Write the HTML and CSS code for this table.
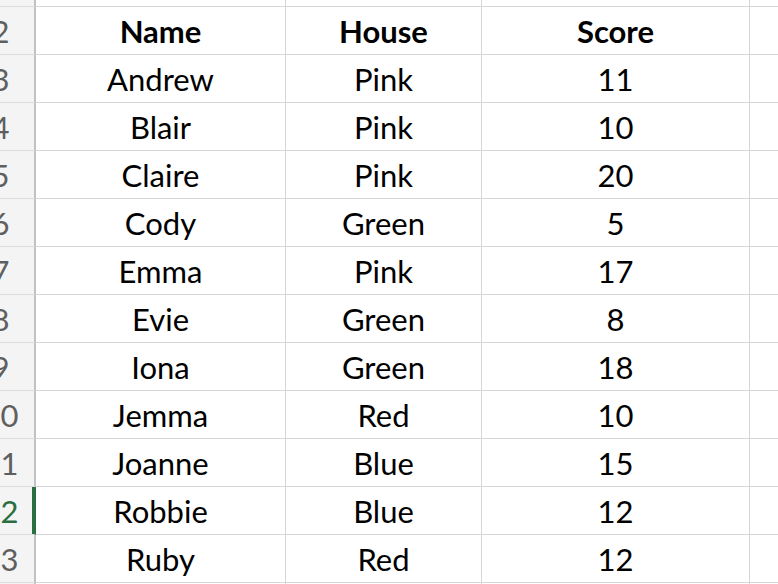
FILE: index.html
```html
<!DOCTYPE html>
<html lang="en">
<head>
<meta charset="utf-8">
<title>Scores</title>
<link rel="stylesheet" href="styles.css">
</head>
<body>
<div class="sheet">
  <div class="row"><div class="rh">1</div><div class="c left">Gym Scores</div><div class="c"></div><div class="c"></div><div class="c"></div></div>
  <div class="row head"><div class="rh">2</div><div class="c">Name</div><div class="c">House</div><div class="c">Score</div><div class="c"></div></div>
  <div class="row"><div class="rh">3</div><div class="c">Andrew</div><div class="c">Pink</div><div class="c">11</div><div class="c"></div></div>
  <div class="row"><div class="rh">4</div><div class="c">Blair</div><div class="c">Pink</div><div class="c">10</div><div class="c"></div></div>
  <div class="row"><div class="rh">5</div><div class="c">Claire</div><div class="c">Pink</div><div class="c">20</div><div class="c"></div></div>
  <div class="row"><div class="rh">6</div><div class="c">Cody</div><div class="c">Green</div><div class="c">5</div><div class="c"></div></div>
  <div class="row"><div class="rh">7</div><div class="c">Emma</div><div class="c">Pink</div><div class="c">17</div><div class="c"></div></div>
  <div class="row"><div class="rh">8</div><div class="c">Evie</div><div class="c">Green</div><div class="c">8</div><div class="c"></div></div>
  <div class="row"><div class="rh">9</div><div class="c">Iona</div><div class="c">Green</div><div class="c">18</div><div class="c"></div></div>
  <div class="row"><div class="rh">10</div><div class="c">Jemma</div><div class="c">Red</div><div class="c">10</div><div class="c"></div></div>
  <div class="row"><div class="rh">11</div><div class="c">Joanne</div><div class="c">Blue</div><div class="c">15</div><div class="c"></div></div>
  <div class="row sel"><div class="rh">12</div><div class="c">Robbie</div><div class="c">Blue</div><div class="c">12</div><div class="c"></div></div>
  <div class="row"><div class="rh">13</div><div class="c">Ruby</div><div class="c">Red</div><div class="c">12</div><div class="c"></div></div>
  <div class="row"><div class="rh">14</div><div class="c"></div><div class="c"></div><div class="c"></div><div class="c"></div></div>
</div>
</body>
</html>
```

FILE: styles.css
```css
html, body {
  margin: 0;
  padding: 0;
  background: #ffffff;
  overflow: hidden;
}

body {
  width: 778px;
  height: 584px;
  font-family: Lato, "Open Sans", sans-serif;
  font-size: 31px;
  color: #000000;
}

.sheet {
  margin-top: -41px;
  margin-left: -33px;
  width: 900px;
}

.row {
  display: grid;
  grid-template-columns: 69px 250px 196px 268px 117px;
  height: 48px;
}

.rh,
.c {
  box-sizing: border-box;
  height: 48px;
  padding-top: 1px;
  line-height: 46px;
  text-align: center;
  white-space: nowrap;
  overflow: hidden;
  border-bottom: 1px solid #d6d6d6;
}

.rh {
  background: #f4f4f4;
  color: #5f5f5f;
  border-right: 2px solid #c2c2c2;
  border-bottom-color: #dcdcdc;
}

.c {
  border-right: 1px solid #d6d6d6;
}

.c.left {
  text-align: left;
  padding-left: 67px;
}

.head .c {
  font-weight: 700;
}

.sel .rh {
  color: #2a6e41;
  border-right-color: #2a6e41;
  box-shadow: inset -2px 0 0 #2a6e41;
}
```
